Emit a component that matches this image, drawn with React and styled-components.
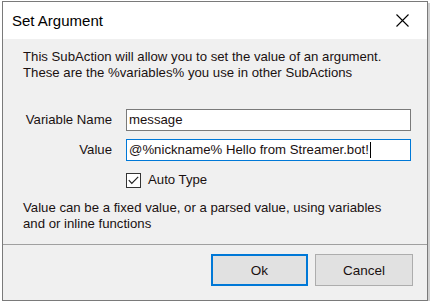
import React from 'react';
import styled, { createGlobalStyle } from 'styled-components';

const Global = createGlobalStyle`
  html, body {
    margin: 0;
    padding: 0;
    background: #ffffff;
  }
  body {
    font-family: "Liberation Sans", Arial, sans-serif;
    color: #1a1010;
  }
`;

const Window = styled.div`
  box-sizing: border-box;
  margin: 1px 0 0 2px;
  width: 426px;
  height: 300px;
  border: 1px solid #7a7a7a;
  box-shadow: 2px 2px 0 #d0d0d0;
  display: flex;
  flex-direction: column;
  background: #f0f0f0;
`;

const TitleBar = styled.div`
  height: 37px;
  flex: none;
  background: #ffffff;
  display: flex;
  align-items: center;
  justify-content: space-between;
  padding: 0 0 0 9px;
  font-size: 15px;
  color: #000;
`;

const CloseBtn = styled.div`
  width: 46px;
  height: 37px;
  display: flex;
  align-items: center;
  justify-content: center;
  margin-right: 2px;
`;

const Body = styled.div`
  flex: 1;
  display: flex;
  flex-direction: column;
  font-size: 13.2px;
  line-height: 16px;
`;

const Note = styled.p`
  margin: ${p => p.$top || 0}px 0 0 20px;
  white-space: pre-line;
`;

const Form = styled.div`
  display: grid;
  grid-template-columns: 90px 285px;
  column-gap: 14px;
  row-gap: 8px;
  margin: 28px 0 0 19px;
  align-items: center;
`;

const Label = styled.label`
  text-align: right;
  white-space: nowrap;
`;

const Input = styled.div`
  box-sizing: border-box;
  height: 22px;
  background: #fff;
  border: 1px solid ${p => (p.$focused ? '#0078d7' : '#7a7a7a')};
  padding: 0 2px;
  display: flex;
  align-items: center;
  white-space: nowrap;
`;

const Caret = styled.span`
  display: inline-block;
  width: 1px;
  height: 16px;
  background: #000;
  margin-left: 1px;
`;

const CheckRow = styled.div`
  grid-column: 2;
  display: flex;
  align-items: center;
  gap: 7px;
  margin-top: 3px;
`;

const Box = styled.span`
  box-sizing: border-box;
  width: 15px;
  height: 15px;
  border: 1px solid #333;
  background: #fff;
  display: flex;
  align-items: center;
  justify-content: center;
`;

const Separator = styled.div`
  height: 1px;
  background: #a0a0a0;
  margin-top: 12px;
`;

const Buttons = styled.div`
  display: flex;
  justify-content: flex-end;
  gap: 7px;
  padding: 9px 14px 0 0;
`;

const Button = styled.button`
  box-sizing: border-box;
  width: ${p => (p.$default ? 97 : 98)}px;
  height: 32px;
  background: #e1e1e1;
  border: ${p => (p.$default ? '2px solid #0078d7' : '1px solid #adadad')};
  font-family: inherit;
  font-size: 13.5px;
  color: #1a1010;
  padding: 0;
`;

export default function App() {
  return (
    <>
      <Global />
      <Window>
        <TitleBar>
          <span>Set Argument</span>
          <CloseBtn>
            <svg width="13" height="13" viewBox="0 0 13 13">
              <path d="M0.5 0.5 L12.5 12.5 M12.5 0.5 L0.5 12.5" stroke="#000" strokeWidth="1.1" fill="none" />
            </svg>
          </CloseBtn>
        </TitleBar>
        <Body>
          <Note $top={10}>
            {'This SubAction will allow you to set the value of an argument.\nThese are the %variables% you use in other SubActions'}
          </Note>
          <Form>
            <Label>Variable Name</Label>
            <Input>message</Input>
            <Label>Value</Label>
            <Input $focused>
              @%nickname% Hello from Streamer.bot!<Caret />
            </Input>
            <CheckRow>
              <Box>
                <svg width="11" height="9" viewBox="0 0 11 9">
                  <path d="M0.8 4.2 L3.8 7.4 L10.2 0.8" stroke="#222" strokeWidth="1.2" fill="none" />
                </svg>
              </Box>
              <span>Auto Type</span>
            </CheckRow>
          </Form>
          <Note $top={12}>
            {'Value can be a fixed value, or a parsed value, using variables\nand or inline functions'}
          </Note>
          <Separator />
          <Buttons>
            <Button $default>Ok</Button>
            <Button>Cancel</Button>
          </Buttons>
        </Body>
      </Window>
    </>
  );
}
